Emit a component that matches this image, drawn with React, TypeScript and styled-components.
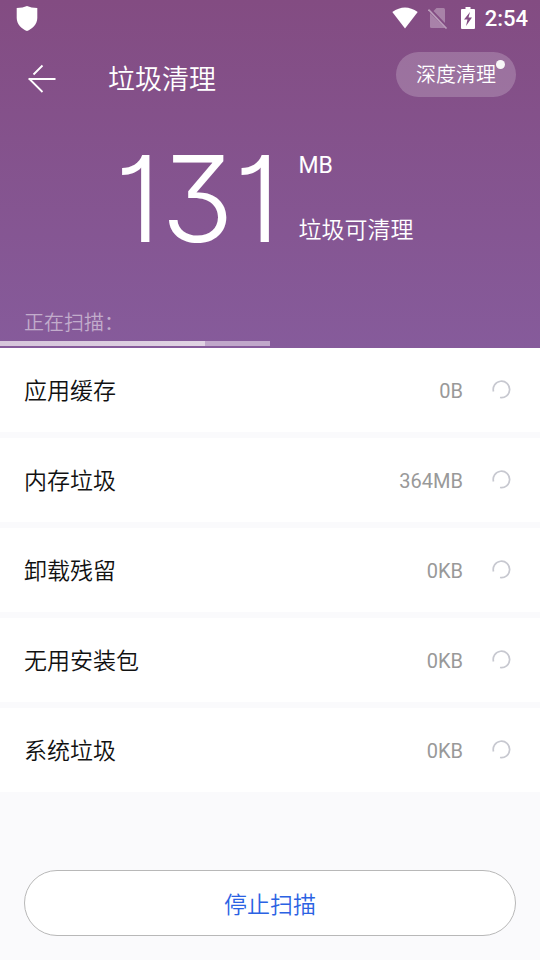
import React from "react";
import styled, { createGlobalStyle } from "styled-components";

const GlobalStyle = createGlobalStyle`
  * { box-sizing: border-box; }
  html, body, #root { height: 100%; }
  body {
    margin: 0;
    background: #fafafc;
    font-family: Roboto, "Noto Sans CJK SC", sans-serif;
  }
  button { font-family: inherit; cursor: pointer; }
`;

const Screen = styled.div`
  min-height: 100%;
  display: flex;
  flex-direction: column;
`;

const Hero = styled.header`
  display: flex;
  flex-direction: column;
  color: #fff;
  background: linear-gradient(#834c82, #865b9b);
  padding-bottom: 2px;
`;

const StatusBar = styled.div`
  display: flex;
  align-items: center;
  justify-content: space-between;
  height: 36px;
  padding: 0 12px 0 16px;
`;

const StatusIcons = styled.div`
  display: flex;
  align-items: center;
  gap: 10px;
`;

const Clock = styled.time`
  padding-top: 2px;
  font-size: 22px;
  font-weight: 500;
  line-height: 26px;
`;

const Toolbar = styled.div`
  display: flex;
  align-items: center;
  height: 84px;
  padding: 0 24px;
`;

const BackButton = styled.button`
  display: flex;
  width: 36px;
  padding: 0;
  border: 0;
  background: none;
  color: inherit;
`;

const Title = styled.h1`
  flex: 1;
  margin: 0;
  padding: 4px 0 0 48px;
  font-size: 27px;
  font-weight: 350;
  line-height: 40px;
`;

const DeepCleanButton = styled.button`
  position: relative;
  align-self: flex-start;
  height: 45px;
  margin-top: 16px;
  padding: 0 20px 2px;
  border: 0;
  border-radius: 23px;
  background: rgba(255, 255, 255, 0.2);
  color: #fff;
  font-size: 20px;
  font-weight: 350;
`;

const Dot = styled.span`
  position: absolute;
  top: 8px;
  right: 11px;
  width: 9px;
  height: 9px;
  border-radius: 50%;
  background: #f7f7f7;
`;

const Summary = styled.section`
  display: flex;
  justify-content: center;
  gap: 18px;
  height: 180px;
  padding: 28px 12px 0 0;
`;

const Amount = styled.strong`
  font-family: Inter, sans-serif;
  font-size: 120px;
  font-weight: 300;
  font-feature-settings: "cv09" 1, "cv01" 1;
  line-height: 102px;
`;

const SummaryLabels = styled.div`
  display: flex;
  flex-direction: column;
  gap: 33px;
  padding-top: 2px;
  font-size: 23px;
  line-height: 32px;
`;

const SummaryCaption = styled.span`
  font-weight: 350;
`;

const Scanning = styled.p`
  margin: 0;
  padding: 8px 24px 3px;
  color: rgba(255, 255, 255, 0.5);
  font-size: 20px;
  font-weight: 350;
  line-height: 30px;
`;

const Track = styled.div`
  display: flex;
  height: 5px;
`;

const Segment = styled.div<{ $strong?: boolean }>`
  background: ${(p) => (p.$strong ? "linear-gradient(90deg, #d6c5db, #e0d3e3)" : "#c0a7ca")};
`;

const Categories = styled.ul`
  display: flex;
  flex-direction: column;
  gap: 6px;
  margin: 0;
  padding: 0;
  list-style: none;
`;

const Category = styled.li`
  display: flex;
  align-items: center;
  height: 84px;
  padding: 0 28px 0 24px;
  background: #fff;
`;

const CategoryName = styled.span`
  flex: 1;
  padding-bottom: 2px;
  color: #111;
  font-size: 23px;
  font-weight: 350;
`;

const CategorySize = styled.span`
  margin-right: 28px;
  padding-top: 2px;
  color: #999;
  font-size: 20px;
`;

const Footer = styled.footer`
  display: flex;
  margin-top: auto;
  padding: 24px;
`;

const StopButton = styled.button`
  flex: 1;
  height: 66px;
  padding-bottom: 2px;
  border: 1px solid #b8b8b8;
  border-radius: 33px;
  background: #fff;
  color: #2b62e3;
  font-size: 23px;
  font-weight: 350;
`;

const ShieldIcon = () => (
  <svg width="22" height="26" viewBox="0 0 22 26" aria-hidden="true">
    <path d="M11 1Q15 3 21.300 3V13C21.300 19.500 16 24 11 26C6 24 .7 19.500 .7 13V3Q7 3 11 1Z" fill="#fff" />
  </svg>
);

const WifiIcon = () => (
  <svg width="26" height="22" viewBox="0 0 26 22" aria-hidden="true">
    <path d="M.3 5Q13-4 25.700 5L13 21.500Z" fill="#fff" />
  </svg>
);

const NoSimIcon = () => (
  <svg width="23" height="22" viewBox="0 0 23 22" aria-hidden="true">
    <path d="M8.500 1H15.500Q17 1 17 2.500V16L5.500 4Z" fill="#fff" opacity=".3" />
    <path d="M2 6L17 21H3.500Q2 21 2 19.500Z" fill="#fff" opacity=".3" />
    <path d="M.5 2.500L18.500 21.500" stroke="#fff" strokeWidth="1.600" opacity=".45" />
  </svg>
);

const BatteryIcon = () => (
  <svg width="14" height="22" viewBox="0 0 14 22" aria-hidden="true">
    <path
      d="M4.500 0H9.500V2H13Q14 2 14 3V21Q14 22 13 22H1Q0 22 0 21V3Q0 2 1 2H4.500ZM9 5L3 12.500H6.500L5 19L11 10.500H7.500Z"
      fill="#fff"
      fillRule="evenodd"
    />
  </svg>
);

const BackIcon = () => (
  <svg width="36" height="30" viewBox="0 0 36 30" fill="none" stroke="#fff" strokeWidth="1.800" aria-hidden="true">
    <path d="M4.500 16H31.500M18.500 2.500L9.500 11.500M5 15.500L18.500 29" />
  </svg>
);

const Spinner = () => (
  <svg width="21" height="20" viewBox="0 0 21 20" fill="none" aria-hidden="true">
    <path d="M2.500 11.500A8.200 8.200 0 1 1 9 17.500" stroke="#c7c8d0" strokeWidth="1.700" />
  </svg>
);

const categories = [
  { name: "应用缓存", size: "0B" },
  { name: "内存垃圾", size: "364MB" },
  { name: "卸载残留", size: "0KB" },
  { name: "无用安装包", size: "0KB" },
  { name: "系统垃圾", size: "0KB" },
];

const progress = { done: 38, pending: 12 };

export default function App() {
  return (
    <>
      <GlobalStyle />
      <Screen>
        <Hero>
          <StatusBar>
            <ShieldIcon />
            <StatusIcons>
              <WifiIcon />
              <NoSimIcon />
              <BatteryIcon />
              <Clock>2:54</Clock>
            </StatusIcons>
          </StatusBar>
          <Toolbar>
            <BackButton aria-label="返回">
              <BackIcon />
            </BackButton>
            <Title>垃圾清理</Title>
            <DeepCleanButton>
              深度清理
              <Dot />
            </DeepCleanButton>
          </Toolbar>
          <Summary>
            <Amount>131</Amount>
            <SummaryLabels>
              <span>MB</span>
              <SummaryCaption>垃圾可清理</SummaryCaption>
            </SummaryLabels>
          </Summary>
          <Scanning>正在扫描：</Scanning>
          <Track role="progressbar" aria-label="正在扫描" aria-valuenow={progress.done}>
            <Segment $strong style={{ width: `${progress.done}%` }} />
            <Segment style={{ width: `${progress.pending}%` }} />
          </Track>
        </Hero>
        <Categories>
          {categories.map((c) => (
            <Category key={c.name}>
              <CategoryName>{c.name}</CategoryName>
              <CategorySize>{c.size}</CategorySize>
              <Spinner />
            </Category>
          ))}
        </Categories>
        <Footer>
          <StopButton>停止扫描</StopButton>
        </Footer>
      </Screen>
    </>
  );
}
